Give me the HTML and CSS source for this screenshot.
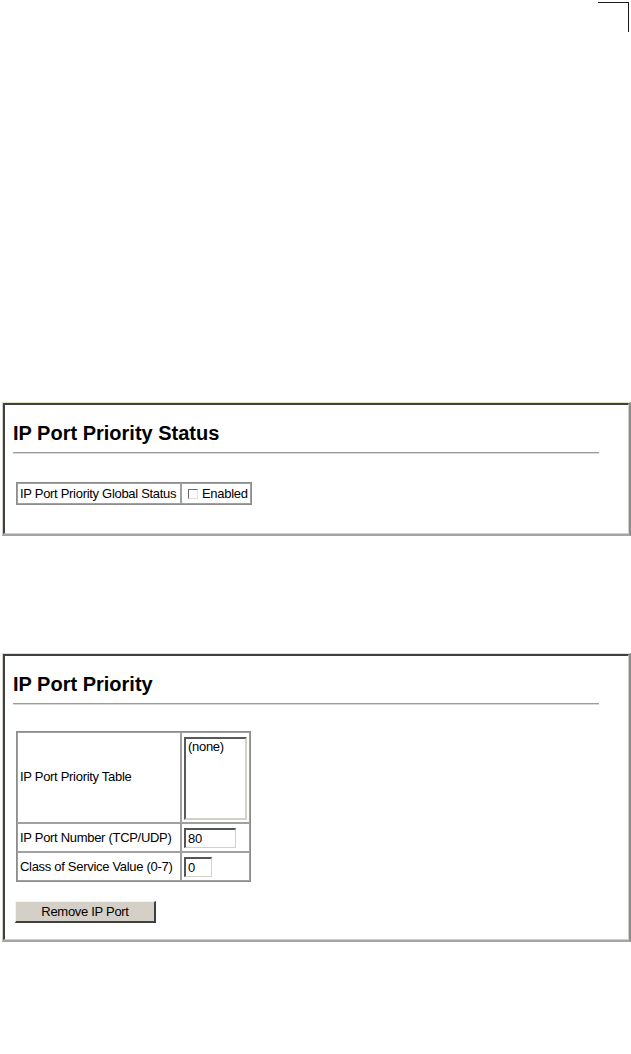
FILE: index.html
```html
<!DOCTYPE html>
<html lang="en">
<head>
    <meta charset="UTF-8">
    <meta name="viewport" content="width=device-width, initial-scale=1.0">
    <title>IP Port Priority</title>
    <link rel="stylesheet" href="styles.css">
</head>
<body>

<div class="crop-mark"></div>

<div class="panel panel-status">
    <div class="panel-inner">
        <h1 class="panel-title">IP Port Priority Status</h1>
        <div class="title-rule"></div>

        <table class="form-table">
            <tr class="row-check">
                <td class="label-cell">IP Port Priority Global Status</td>
                <td class="value-cell">
                    <label class="check-label">
                        <span class="checkbox"></span>
                        <span>Enabled</span>
                    </label>
                </td>
            </tr>
        </table>
    </div>
</div>

<div class="panel panel-priority">
    <div class="panel-inner">
        <h1 class="panel-title">IP Port Priority</h1>
        <div class="title-rule"></div>

        <table class="form-table">
            <tr class="row-list">
                <td class="label-cell">IP Port Priority Table</td>
                <td class="value-cell">
                    <div class="listbox">(none)</div>
                </td>
            </tr>
            <tr class="row-input">
                <td class="label-cell">IP Port Number (TCP/UDP)</td>
                <td class="value-cell">
                    <input class="text-field field-port" type="text" value="80">
                </td>
            </tr>
            <tr class="row-input">
                <td class="label-cell">Class of Service Value (0-7)</td>
                <td class="value-cell">
                    <input class="text-field field-cos" type="text" value="0">
                </td>
            </tr>
        </table>

        <button class="win-button" type="button">Remove IP Port</button>
    </div>
</div>

</body>
</html>
```

FILE: styles.css
```css
body {
    margin: 0;
    background-color: #ffffff;
    font-family: "Liberation Sans", Arial, sans-serif;
    color: #000000;
}

.crop-mark {
    margin: 2px 0 0 598px;
    width: 30px;
    height: 29px;
    border-top: 1px solid #1a1a1a;
    border-right: 1px solid #1a1a1a;
}

.panel {
    margin-left: 2px;
    width: 629px;
    box-sizing: border-box;
    border-style: solid;
    border-width: 1px 2px 2px 1px;
    border-color: #dde4c4 #8c8c8c #a4a4a4 #d4d0c8;
}

.panel-status {
    margin-top: 370px;
}

.panel-priority {
    margin-top: 117px;
}

.panel-inner {
    border-style: solid;
    border-width: 2px 1px 1px 2px;
    border-color: #404040 #d4d0c8 #d4d0c8 #404040;
    padding: 17px 29px 28px 8px;
}

.panel-priority .panel-inner {
    padding-bottom: 16px;
}

.panel-title {
    margin: 0;
    font-size: 20px;
    line-height: 23px;
    font-weight: bold;
}

.title-rule {
    margin-top: 7px;
    border-top: 1px solid #9c9c9c;
    border-bottom: 1px solid #d8d8d8;
}

.form-table {
    margin: 26px 0 0 3px;
    border-collapse: separate;
    border-spacing: 0;
    border: 1px solid #8c8c8c;
    font-size: 13px;
    letter-spacing: -0.3px;
}

.panel-status .form-table {
    margin-top: 28px;
}

.form-table td {
    border: 1px solid #a0a0a0;
    padding: 0 2px;
    box-sizing: border-box;
}

.label-cell {
    width: 164px;
    white-space: nowrap;
}

.value-cell {
    width: 69px;
}

.row-check td {
    height: 21px;
}

.row-list td {
    height: 90px;
    padding-top: 4px;
    padding-bottom: 2px;
}

.row-list .label-cell {
    padding-top: 0;
}

.row-input td {
    height: 29px;
}

.check-label {
    display: flex;
    align-items: center;
    gap: 4px;
    padding-left: 4px;
}

.checkbox {
    display: inline-block;
    width: 10px;
    height: 10px;
    box-sizing: border-box;
    border-style: solid;
    border-width: 1px;
    border-color: #6a6a6a #e0e0e0 #e0e0e0 #6a6a6a;
    background-color: #ffffff;
}

.listbox {
    width: 63px;
    height: 83px;
    box-sizing: border-box;
    border-style: solid;
    border-width: 2px;
    border-color: #5a5a5a #d4d0c8 #d4d0c8 #5a5a5a;
    padding: 0 2px;
    font-size: 13px;
    line-height: 15px;
}

.text-field {
    display: block;
    height: 20px;
    box-sizing: border-box;
    margin: 0;
    padding: 0 2px;
    border-style: solid;
    border-width: 2px 1px 1px 2px;
    border-color: #555555 #d4d0c8 #d4d0c8 #555555;
    font-family: "Liberation Sans", Arial, sans-serif;
    font-size: 13px;
    letter-spacing: -0.3px;
    color: #000000;
    background-color: #ffffff;
}

.field-port {
    width: 52px;
}

.field-cos {
    width: 28px;
}

.win-button {
    display: block;
    margin: 19px 0 0 2px;
    width: 141px;
    height: 22px;
    padding: 0;
    background-color: #d4d0c8;
    border-style: solid;
    border-width: 1px 2px 2px 1px;
    border-color: #f4f4f4 #404040 #404040 #f4f4f4;
    font-family: "Liberation Sans", Arial, sans-serif;
    font-size: 13px;
    letter-spacing: -0.3px;
    color: #000000;
}
```
